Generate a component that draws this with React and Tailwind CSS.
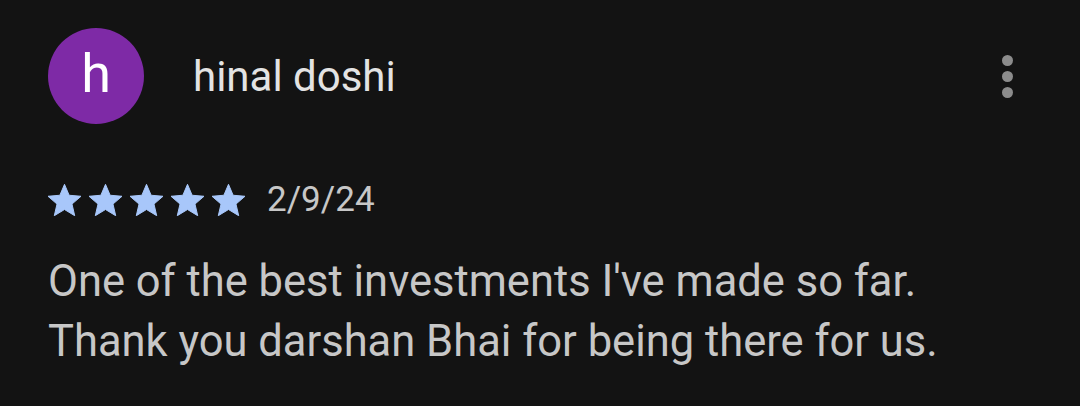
import React from 'react';

const STAR = 'M12 17.27L18.18 21l-1.64-7.03L22 9.24l-7.19-.61L12 2 9.19 8.63 2 9.24l5.46 4.73L5.82 21z';

function Star() {
  return (
    <svg viewBox="2 2 20 19" className="w-[33px] h-[32px]" fill="#a8c7fa" stroke="#a8c7fa" strokeWidth="0.6" strokeLinejoin="round">
      <path d={STAR} />
    </svg>
  );
}

export default function App() {
  return (
    <div className="w-[1080px] h-[406px] bg-[#131313] pl-[48px] pr-[67px] pt-[28px] font-['Roboto',sans-serif] overflow-hidden">
      {/* header */}
      <div className="flex items-center">
        <div className="w-[96px] h-[96px] rounded-full bg-[#7e2aa6] flex items-center justify-center text-white text-[54px] leading-none pb-[4px]">
          h
        </div>
        <div className="ml-[49px] text-[42px] text-[#e3e3e3] leading-none pt-[2px]">hinal doshi</div>
        <div className="ml-auto flex flex-col gap-[5px]">
          <span className="w-[11px] h-[11px] rounded-full bg-[#8c8c8c]" />
          <span className="w-[11px] h-[11px] rounded-full bg-[#8c8c8c]" />
          <span className="w-[11px] h-[11px] rounded-full bg-[#8c8c8c]" />
        </div>
      </div>

      {/* rating */}
      <div className="flex items-center mt-[58px]">
        <div className="flex gap-[8px]">
          <Star /><Star /><Star /><Star /><Star />
        </div>
        <span className="ml-[22px] text-[35px] text-[#c7c7c7] leading-none">2/9/24</span>
      </div>

      {/* body */}
      <p className="mt-[35px] text-[43.5px] leading-[60px] text-[#c7c7c7]">
        One of the best investments I've made so far.
        <br />
        Thank you darshan Bhai for being there for us.
      </p>
    </div>
  );
}
